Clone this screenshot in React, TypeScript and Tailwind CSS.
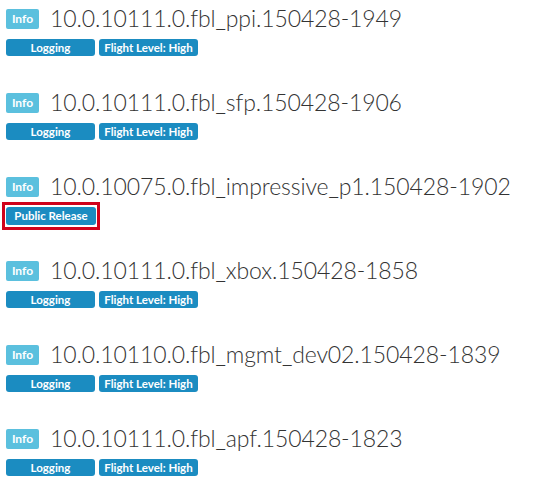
import React from "react";

type Row = { title: string; tags: { label: string; w: string }[]; highlight?: boolean };

const rows: Row[] = [
  { title: "10.0.10111.0.fbl_ppi.150428-1949", tags: [{ label: "Logging", w: "w-[89px]" }, { label: "Flight Level: High", w: "w-[99px]" }] },
  { title: "10.0.10111.0.fbl_sfp.150428-1906", tags: [{ label: "Logging", w: "w-[89px]" }, { label: "Flight Level: High", w: "w-[99px]" }] },
  { title: "10.0.10075.0.fbl_impressive_p1.150428-1902", tags: [{ label: "Public Release", w: "w-[90px]" }], highlight: true },
  { title: "10.0.10111.0.fbl_xbox.150428-1858", tags: [{ label: "Logging", w: "w-[89px]" }, { label: "Flight Level: High", w: "w-[99px]" }] },
  { title: "10.0.10110.0.fbl_mgmt_dev02.150428-1839", tags: [{ label: "Logging", w: "w-[89px]" }, { label: "Flight Level: High", w: "w-[99px]" }] },
  { title: "10.0.10111.0.fbl_apf.150428-1823", tags: [{ label: "Logging", w: "w-[89px]" }, { label: "Flight Level: High", w: "w-[99px]" }] },
];

function Tag({ label, w, h }: { label: string; w: string; h: string }) {
  return (
    <span className={`${w} ${h} flex items-center justify-center rounded-[3px] bg-[#1b8cc1] text-white text-[11.5px] font-bold leading-none`}>
      {label}
    </span>
  );
}

export default function App() {
  return (
    <div className="w-[557px] h-[496px] bg-white pl-[6px] pt-[9px] flex flex-col gap-[37px]" style={{ fontFamily: "Lato, 'Open Sans', sans-serif" }}>
      {rows.map((r, i) => (
        <div key={i} className="flex flex-col">
          <div className="flex items-center h-[20px] gap-[11px]">
            <span className="w-[33px] h-[20px] flex items-center justify-center bg-[#5bc0de] text-white text-[12px] font-bold rounded-[2px] leading-none">
              Info
            </span>
            <span className="text-[23px] tracking-[-0.1px] font-light text-[#333] leading-none whitespace-nowrap -mt-[2px]">{r.title}</span>
          </div>
          {r.highlight ? (
            <div className="mt-[5px] -mb-[6px] -ml-[4px] w-fit border-[3px] border-[#d0021b] px-[1px] py-[2px] flex">
              {r.tags.map((t, j) => (
                <Tag key={j} {...t} h="h-[18px]" />
              ))}
            </div>
          ) : (
            <div className="mt-[10px] flex gap-[4px]">
              {r.tags.map((t, j) => (
                <Tag key={j} {...t} h="h-[17px]" />
              ))}
            </div>
          )}
        </div>
      ))}
    </div>
  );
}
